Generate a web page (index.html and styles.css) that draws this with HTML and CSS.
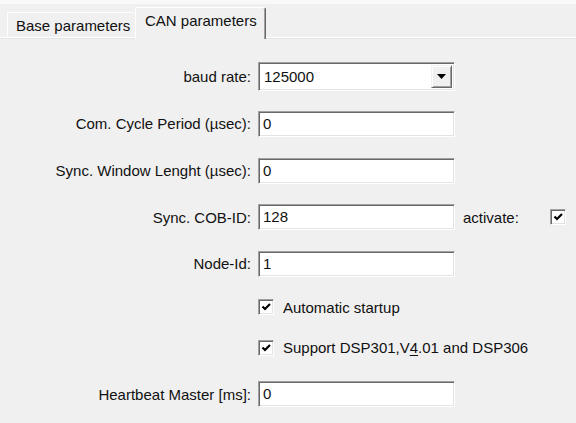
FILE: index.html
```html
<!DOCTYPE html>
<html lang="en">
<head>
<meta charset="utf-8">
<title>CAN parameters</title>
<link rel="stylesheet" href="styles.css">
</head>
<body>
<div class="dialog">
  <div class="tabstrip">
    <div class="tab">Base parameters</div>
    <div class="tab active">CAN parameters</div>
  </div>
  <div class="panel">
    <div class="form">
      <label class="lbl">baud rate:</label>
      <div class="combo">
        <span class="value">125000</span>
        <span class="drop"><svg width="9" height="5" viewBox="0 0 9 5"><polygon points="0,0 9,0 4.5,5" fill="#000"/></svg></span>
      </div>
      <span></span>

      <label class="lbl">Com. Cycle Period (µsec):</label>
      <div class="field">0</div>
      <span></span>

      <label class="lbl">Sync. Window Lenght (µsec):</label>
      <div class="field">0</div>
      <span></span>

      <label class="lbl">Sync. COB-ID:</label>
      <div class="field">128</div>
      <div class="extra">
        <span>activate:</span>
        <span class="check"><svg width="12" height="12" viewBox="0 0 12 12"><polyline points="2.5,5.5 5,8 10,3" fill="none" stroke="#000" stroke-width="2.2"/></svg></span>
      </div>

      <label class="lbl">Node-Id:</label>
      <div class="field">1</div>
      <span></span>

      <span></span>
      <div class="option">
        <span class="check"><svg width="12" height="12" viewBox="0 0 12 12"><polyline points="2.5,5.5 5,8 10,3" fill="none" stroke="#000" stroke-width="2.2"/></svg></span>
        <span>Automatic startup</span>
      </div>

      <span></span>
      <div class="option">
        <span class="check"><svg width="12" height="12" viewBox="0 0 12 12"><polyline points="2.5,5.5 5,8 10,3" fill="none" stroke="#000" stroke-width="2.2"/></svg></span>
        <span>Support DSP301,V<u>4</u>.01 and DSP306</span>
      </div>

      <label class="lbl">Heartbeat Master [ms]:</label>
      <div class="field">0</div>
      <span></span>
    </div>
  </div>
</div>
</body>
</html>
```

FILE: styles.css
```css
html, body {
  margin: 0;
  padding: 0;
  background: #f0f0f0;
}

body {
  font-family: "Liberation Sans", Arial, sans-serif;
  font-size: 15px;
  color: #111;
  width: 576px;
  height: 423px;
  overflow: hidden;
}

.dialog {
  display: flex;
  flex-direction: column;
}

/* tab headers */
.tabstrip {
  display: flex;
  align-items: flex-end;
  height: 37px;
  padding-left: 7px;
  background: linear-gradient(#f9f9f9 0 4px, #f0f0f0 4px);
  border-bottom: 1px solid #ffffff;
  box-shadow: 0 1px 0 #e4e4e4;
  position: relative;
}

.tab {
  box-sizing: border-box;
  height: 25px;
  width: 128px;
  padding: 4px 0 0 8px;
  background: #f0f0f0;
  border-left: 1px solid #ffffff;
  border-top: 1px solid #ffffff;
  border-radius: 2px 2px 0 0;
  line-height: 18px;
  white-space: nowrap;
}

.tab.active {
  position: relative;
  z-index: 1;
  width: 131px;
  height: 32px;
  margin-bottom: -2px;
  padding: 4px 0 0 9px;
  border-right: 1px solid #696969;
  box-shadow: inset -1px 0 0 #a0a0a0;
}

/* page body */
.panel {
  padding-top: 15px;
}

.form {
  display: grid;
  grid-template-columns: 251px 197px 1fr;
  grid-template-rows: 47px 47px 47px 46px 47px 40px 41px 52px;
  column-gap: 7px;
  align-items: center;
}

.lbl {
  text-align: right;
  white-space: nowrap;
}

.field,
.combo {
  box-sizing: border-box;
  height: 26px;
  background: #ffffff;
  border-top: 1px solid #a0a0a0;
  border-left: 1px solid #a0a0a0;
  border-right: 1px solid #ffffff;
  border-bottom: 1px solid #ffffff;
  box-shadow: inset 1px 1px 0 #696969, inset -1px -1px 0 #e3e3e3;
  padding: 0 0 0 4px;
  line-height: 24px;
}

.combo {
  height: 29px;
  display: flex;
  align-items: center;
  justify-content: space-between;
  padding: 2px 2px 2px 5px;
}

.drop {
  box-sizing: border-box;
  width: 21px;
  height: 23px;
  display: flex;
  align-items: center;
  justify-content: center;
  background: #f0f0f0;
  border-top: 1px solid #f0f0f0;
  border-left: 1px solid #f0f0f0;
  border-right: 1px solid #696969;
  border-bottom: 1px solid #696969;
  box-shadow: inset 1px 1px 0 #ffffff, inset -1px -1px 0 #a0a0a0;
}

.extra {
  display: flex;
  align-items: center;
  justify-content: space-between;
  width: 103px;
  padding-left: 1px;
}

.option {
  display: flex;
  align-items: center;
  gap: 9px;
  grid-column: 2 / 4;
  white-space: nowrap;
}

.check {
  box-sizing: border-box;
  width: 16px;
  height: 16px;
  display: flex;
  align-items: center;
  justify-content: center;
  background: #ffffff;
  border-top: 1px solid #a0a0a0;
  border-left: 1px solid #a0a0a0;
  border-right: 1px solid #ffffff;
  border-bottom: 1px solid #ffffff;
  box-shadow: inset 1px 1px 0 #696969, inset -1px -1px 0 #e3e3e3;
}

u {
  text-decoration-thickness: 1px;
  text-underline-offset: 2px;
}
```
